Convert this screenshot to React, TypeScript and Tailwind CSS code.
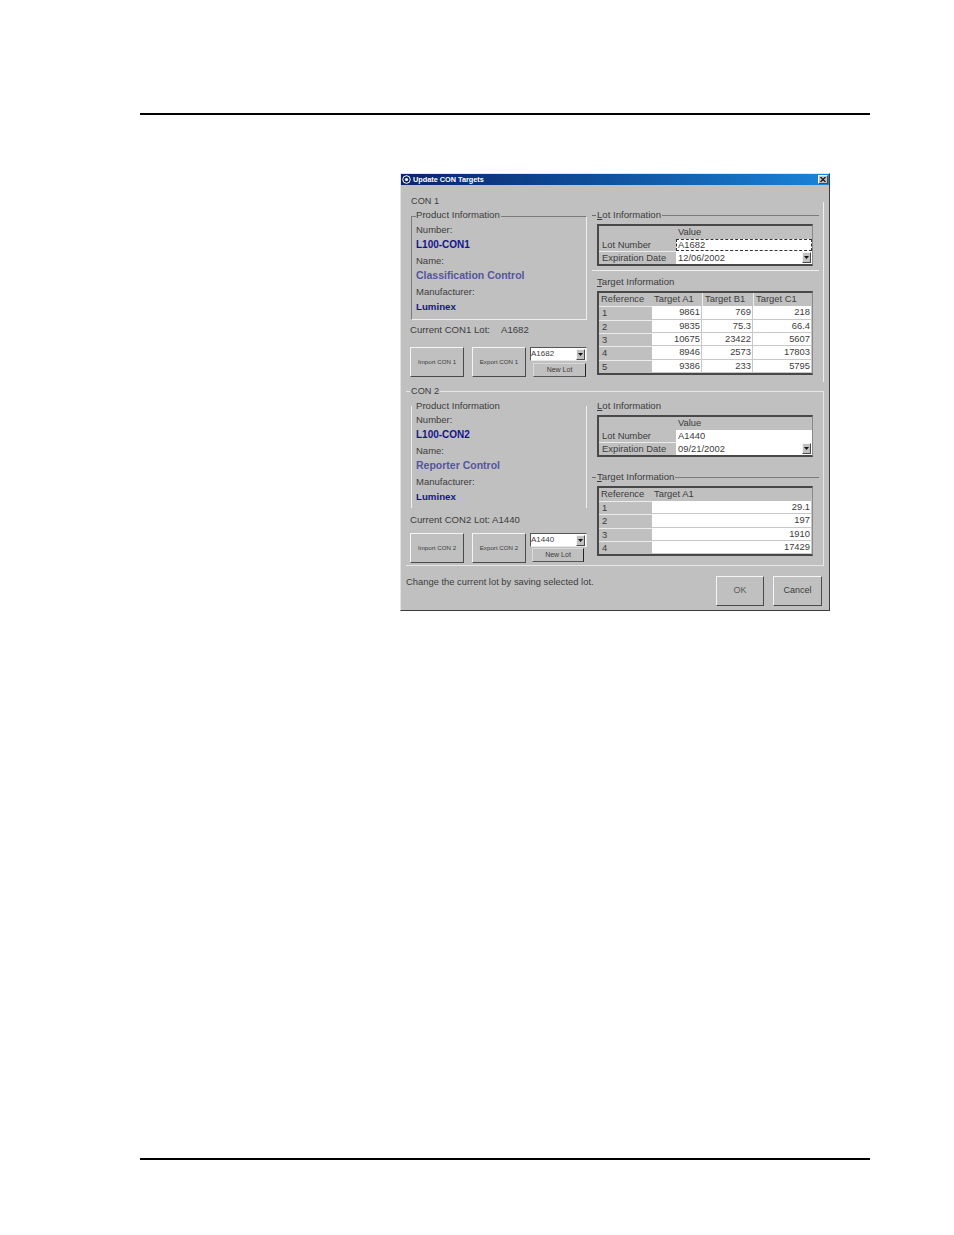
const font = { fontFamily: '"Liberation Sans", Arial, sans-serif' };

const raised = 'border border-t-[#f4f4f4] border-l-[#f4f4f4] border-r-[#4a4a4a] border-b-[#4a4a4a]';

const GroupLabel = ({ text, line = true }: { text: string; line?: boolean }) => (
  <div className="flex h-[12px] items-center">
    <div className={line ? 'h-px w-[4px] bg-[#6e6e6e]' : 'w-[4px]'} />
    <span className="ml-[1px] whitespace-nowrap px-0 text-[9.6px] leading-[12px]">
      <span className="underline decoration-[0.5px]">{text[0]}</span>
      {text.slice(1)}
    </span>
    {line && <div className="ml-[1px] h-px flex-1 bg-[#7c7c7c]" />}
  </div>
);

const ProductGroup = ({
  number,
  name,
  open,
}: {
  number: string;
  name: string;
  open?: boolean;
}) => (
  <div
    className={
      open
        ? 'relative h-[102px] w-[176px] border-x border-[#efefef] pl-[4px] pt-[6px]'
        : 'relative mt-[1px] h-[104px] w-[176px] border border-t-[#7c7c7c] border-l-[#7c7c7c] border-r-[#efefef] border-b-[#efefef] pl-[4px] pt-[5px]'
    }
  >
    <span
      className={
        open
          ? 'absolute -top-[6px] left-[4px] whitespace-nowrap bg-[#c0c0c0] pr-[1px] text-[9.6px] leading-[12px]'
          : 'absolute -top-[8px] left-[4px] whitespace-nowrap bg-[#c0c0c0] pr-[1px] text-[9.6px] leading-[12px]'
      }
    >
      Product Information
    </span>
    <div className="flex h-[92px] flex-col justify-between">
      <div className="h-[15px] text-[9.5px] leading-[15px]">Number:</div>
      <div className="h-[15px] text-[10px] font-bold leading-[15px] text-[#14148c]">{number}</div>
      <div className="h-[15px] text-[9.5px] leading-[15px]">Name:</div>
      <div className="h-[15px] text-[10.5px] font-bold leading-[15px] text-[#55559f]">{name}</div>
      <div className="h-[15px] text-[9.5px] leading-[15px]">Manufacturer:</div>
      <div className="h-[15px] text-[9.7px] font-bold leading-[15px] text-[#14148c]">Luminex</div>
    </div>
  </div>
);

const Button = ({ label, className }: { label: string; className: string }) => (
  <div className={`flex items-center justify-center ${raised} ${className}`}>{label}</div>
);

const Arrow = () => (
  <div className={`flex h-[11px] w-[9px] items-center justify-center bg-[#c0c0c0] ${raised}`}>
    <svg width="5" height="3" viewBox="0 0 5 3">
      <path d="M0 0H5L2.5 3Z" fill="#111" />
    </svg>
  </div>
);

const LotControls = ({
  lot,
  buttonClass,
}: {
  lot: string;
  buttonClass: string;
}) => (
  <div className="ml-[4px] w-[57px]">
    <div className="flex h-[14px] items-center justify-between border border-t-[#555] border-l-[#555] border-r-[#e8e8e8] border-b-[#e8e8e8] bg-white pr-[1px] text-[8px] leading-[12px]">
      <span>{lot}</span>
      <Arrow />
    </div>
    <div
      className={`flex h-[14px] items-center justify-center border border-t-[#dadada] border-l-[#dadada] border-r-[#222] border-b-[#555] text-[7px] ${buttonClass}`}
    >
      New Lot
    </div>
  </div>
);

const LeftColumn = ({
  number,
  name,
  current,
  lot,
  imp,
  exp,
  open,
  gap,
}: {
  number: string;
  name: string;
  current: React.ReactNode;
  lot: string;
  imp: string;
  exp: string;
  open?: boolean;
  gap: string;
}) => (
  <div className="w-[176px]">
    <ProductGroup number={number} name={name} open={open} />
    <div className={open ? '-ml-px mt-[6px] h-[12px] text-[9.6px] leading-[12px]' : '-ml-px mt-[4px] h-[12px] text-[9.6px] leading-[12px]'}>
      {current}
    </div>
    <div className={`-ml-px flex ${gap}`}>
      <Button label={imp} className="h-[30px] w-[54px] text-[6.2px]" />
      <Button label={exp} className="ml-[8px] h-[30px] w-[54px] text-[6.2px]" />
      <LotControls
        lot={lot}
        buttonClass={open ? 'ml-[2px] mt-px w-[52px]' : 'ml-[3px] mt-[2px] w-[53px]'}
      />
    </div>
  </div>
);

const tableBox = 'ml-[5px] grid w-[216px] auto-rows-fr border-y-2 border-l-2 border-r border-y-[#484848] border-l-[#484848] border-r-[#8a8a8a] bg-[#c0c0c0] text-[9.4px]';

const LotTable = ({
  lot,
  date,
  focused,
}: {
  lot: string;
  date: string;
  focused?: boolean;
}) => (
  <div className={`${tableBox} h-[42px] grid-cols-[77px_1fr]`}>
    <div />
    <div className="pl-[2px] leading-[11px]">Value</div>
    <div className="pl-[3px] leading-[12px]">Lot Number</div>
    <div
      className={
        focused
          ? 'border border-dashed border-[#333] bg-white pl-px leading-[10px]'
          : 'bg-white pl-[2px] leading-[12px]'
      }
    >
      {lot}
    </div>
    <div className="border-t border-[#ececec] pl-[3px] leading-[11px]">Expiration Date</div>
    <div className="flex items-center justify-between bg-white pl-[2px] pr-px">
      <span>{date}</span>
      <Arrow />
    </div>
  </div>
);

const TargetTable = ({
  heads,
  rows,
  columns,
  height,
}: {
  heads: string[];
  rows: string[][];
  columns: string;
  height: string;
}) => (
  <div className={`${tableBox} ${height} ${columns}`}>
    {heads.map((h, i) => (
      <div key={h} className={i > 1 ? 'border-l border-[#ececec] pl-[2px] leading-[11px]' : 'pl-[2px] leading-[11px]'}>
        {h}
      </div>
    ))}
    {rows.map((row, r) =>
      row.map((cell, c) =>
        c === 0 ? (
          <div key={`${r}-${c}`} className="border-t border-[#ececec] pl-[3px] leading-[11px]">
            {cell}
          </div>
        ) : (
          <div
            key={`${r}-${c}`}
            className="border-b border-r border-[#c8c8c8] bg-white pr-[1px] text-right leading-[11.5px]"
          >
            {cell}
          </div>
        ),
      ),
    )}
  </div>
);

export default function App() {
  return (
    <div className="h-[1235px] overflow-hidden bg-white pt-[113px]" style={font}>
      <div className="ml-[140px] h-[2px] w-[730px] bg-black" />

      <div className="ml-[400px] mt-[58px] h-[438px] w-[430px] border border-t-[#e4e4e4] border-l-[#e4e4e4] border-r-[#3a3a3a] border-b-[#3a3a3a] bg-[#c0c0c0] text-[#3c3c3c]">
        <div className="flex h-[11px] items-center justify-between bg-gradient-to-r from-[#0a246a] to-[#1a84d8] pl-[1px] pr-px">
          <div className="flex items-center">
            <svg width="9" height="9" viewBox="0 0 9 9">
              <circle cx="4.5" cy="4.5" r="3.8" fill="none" stroke="#fff" strokeWidth="1" />
              <circle cx="4.5" cy="4.5" r="1.6" fill="#fff" />
            </svg>
            <span className="ml-[2px] whitespace-nowrap text-[7.3px] font-bold leading-[11px] text-white">
              Update CON Targets
            </span>
          </div>
          <div className={`flex h-[9px] w-[10px] items-center justify-center bg-[#c0c0c0] ${raised}`}>
            <svg width="6" height="5" viewBox="0 0 6 5">
              <path d="M0.5 0L5.5 5M5.5 0L0.5 5" stroke="#111" strokeWidth="1.2" />
            </svg>
          </div>
        </div>

        {/* CON 1 */}
        <div className="relative ml-[5px] h-[206px] w-[418px] pl-[5px] pt-[10px]">
          <div className="absolute bottom-[9px] right-0 top-[17px] w-px bg-[#efefef]" />
          <div className="h-[12px] text-[9.2px] leading-[12px]">CON 1</div>
          <div className="flex">
            <div className="mt-[8px]">
              <LeftColumn
                number="L100-CON1"
                name="Classification Control"
                current={
                  <span className="flex">
                    <span className="w-[91px]">Current CON1 Lot:</span>
                    <span>A1682</span>
                  </span>
                }
                lot="A1682"
                imp="Import CON 1"
                exp="Export CON 1"
                gap="mt-[11px]"
              />
            </div>
            <div className="ml-[5px] w-[227px]">
              <div className="mt-[2px]">
                <GroupLabel text="Lot Information" />
              </div>
              <div className="mt-[3px]">
                <LotTable lot="A1682" date="12/06/2002" focused />
              </div>
              <div className="mt-[4px] h-px bg-[#efefef]" />
              <div className="mt-[5px]">
                <GroupLabel text="Target Information" line={false} />
              </div>
              <div className="mt-[3px]">
                <TargetTable
                  heads={['Reference', 'Target A1', 'Target B1', 'Target C1']}
                  rows={[
                    ['1', '9861', '769', '218'],
                    ['2', '9835', '75.3', '66.4'],
                    ['3', '10675', '23422', '5607'],
                    ['4', '8946', '2573', '17803'],
                    ['5', '9386', '233', '5795'],
                  ]}
                  columns="grid-cols-[53px_50px_51px_1fr]"
                  height="h-[84px]"
                />
              </div>
            </div>
          </div>
        </div>

        {/* CON 2 */}
        <div className="relative ml-[5px] h-[175px] w-[418px] border-b border-r border-t border-[#e6e6e6] pl-[5px]">
          <span className="absolute -top-[7px] left-[4px] bg-[#c0c0c0] px-px text-[9.2px] leading-[12px]">
            CON 2
          </span>
          <div className="flex">
            <div className="mt-[14px]">
              <LeftColumn
                number="L100-CON2"
                name="Reporter Control"
                current="Current CON2 Lot: A1440"
                lot="A1440"
                imp="Import CON 2"
                exp="Export CON 2"
                gap="mt-[7px]"
                open
              />
            </div>
            <div className="ml-[5px] w-[227px]">
              <div className="mt-[8px]">
                <GroupLabel text="Lot Information" line={false} />
              </div>
              <div className="mt-[3px]">
                <LotTable lot="A1440" date="09/21/2002" />
              </div>
              <div className="mt-[14px]">
                <GroupLabel text="Target Information" />
              </div>
              <div className="mt-[3px]">
                <TargetTable
                  heads={['Reference', 'Target A1']}
                  rows={[
                    ['1', '29.1'],
                    ['2', '197'],
                    ['3', '1910'],
                    ['4', '17429'],
                  ]}
                  columns="grid-cols-[53px_1fr]"
                  height="h-[70px]"
                />
              </div>
            </div>
          </div>
        </div>

        <div className="ml-[5px] mt-[10px] flex w-[416px] justify-between">
          <span className="text-[9.4px] leading-[12px]">Change the current lot by saving selected lot.</span>
          <div className="flex gap-[9px]">
            <Button label="OK" className="h-[30px] w-[48px] text-[9px] text-[#5a5a5a]" />
            <Button label="Cancel" className="h-[30px] w-[49px] text-[9px]" />
          </div>
        </div>
      </div>

      <div className="ml-[140px] mt-[547px] h-[2px] w-[730px] bg-black" />
    </div>
  );
}
